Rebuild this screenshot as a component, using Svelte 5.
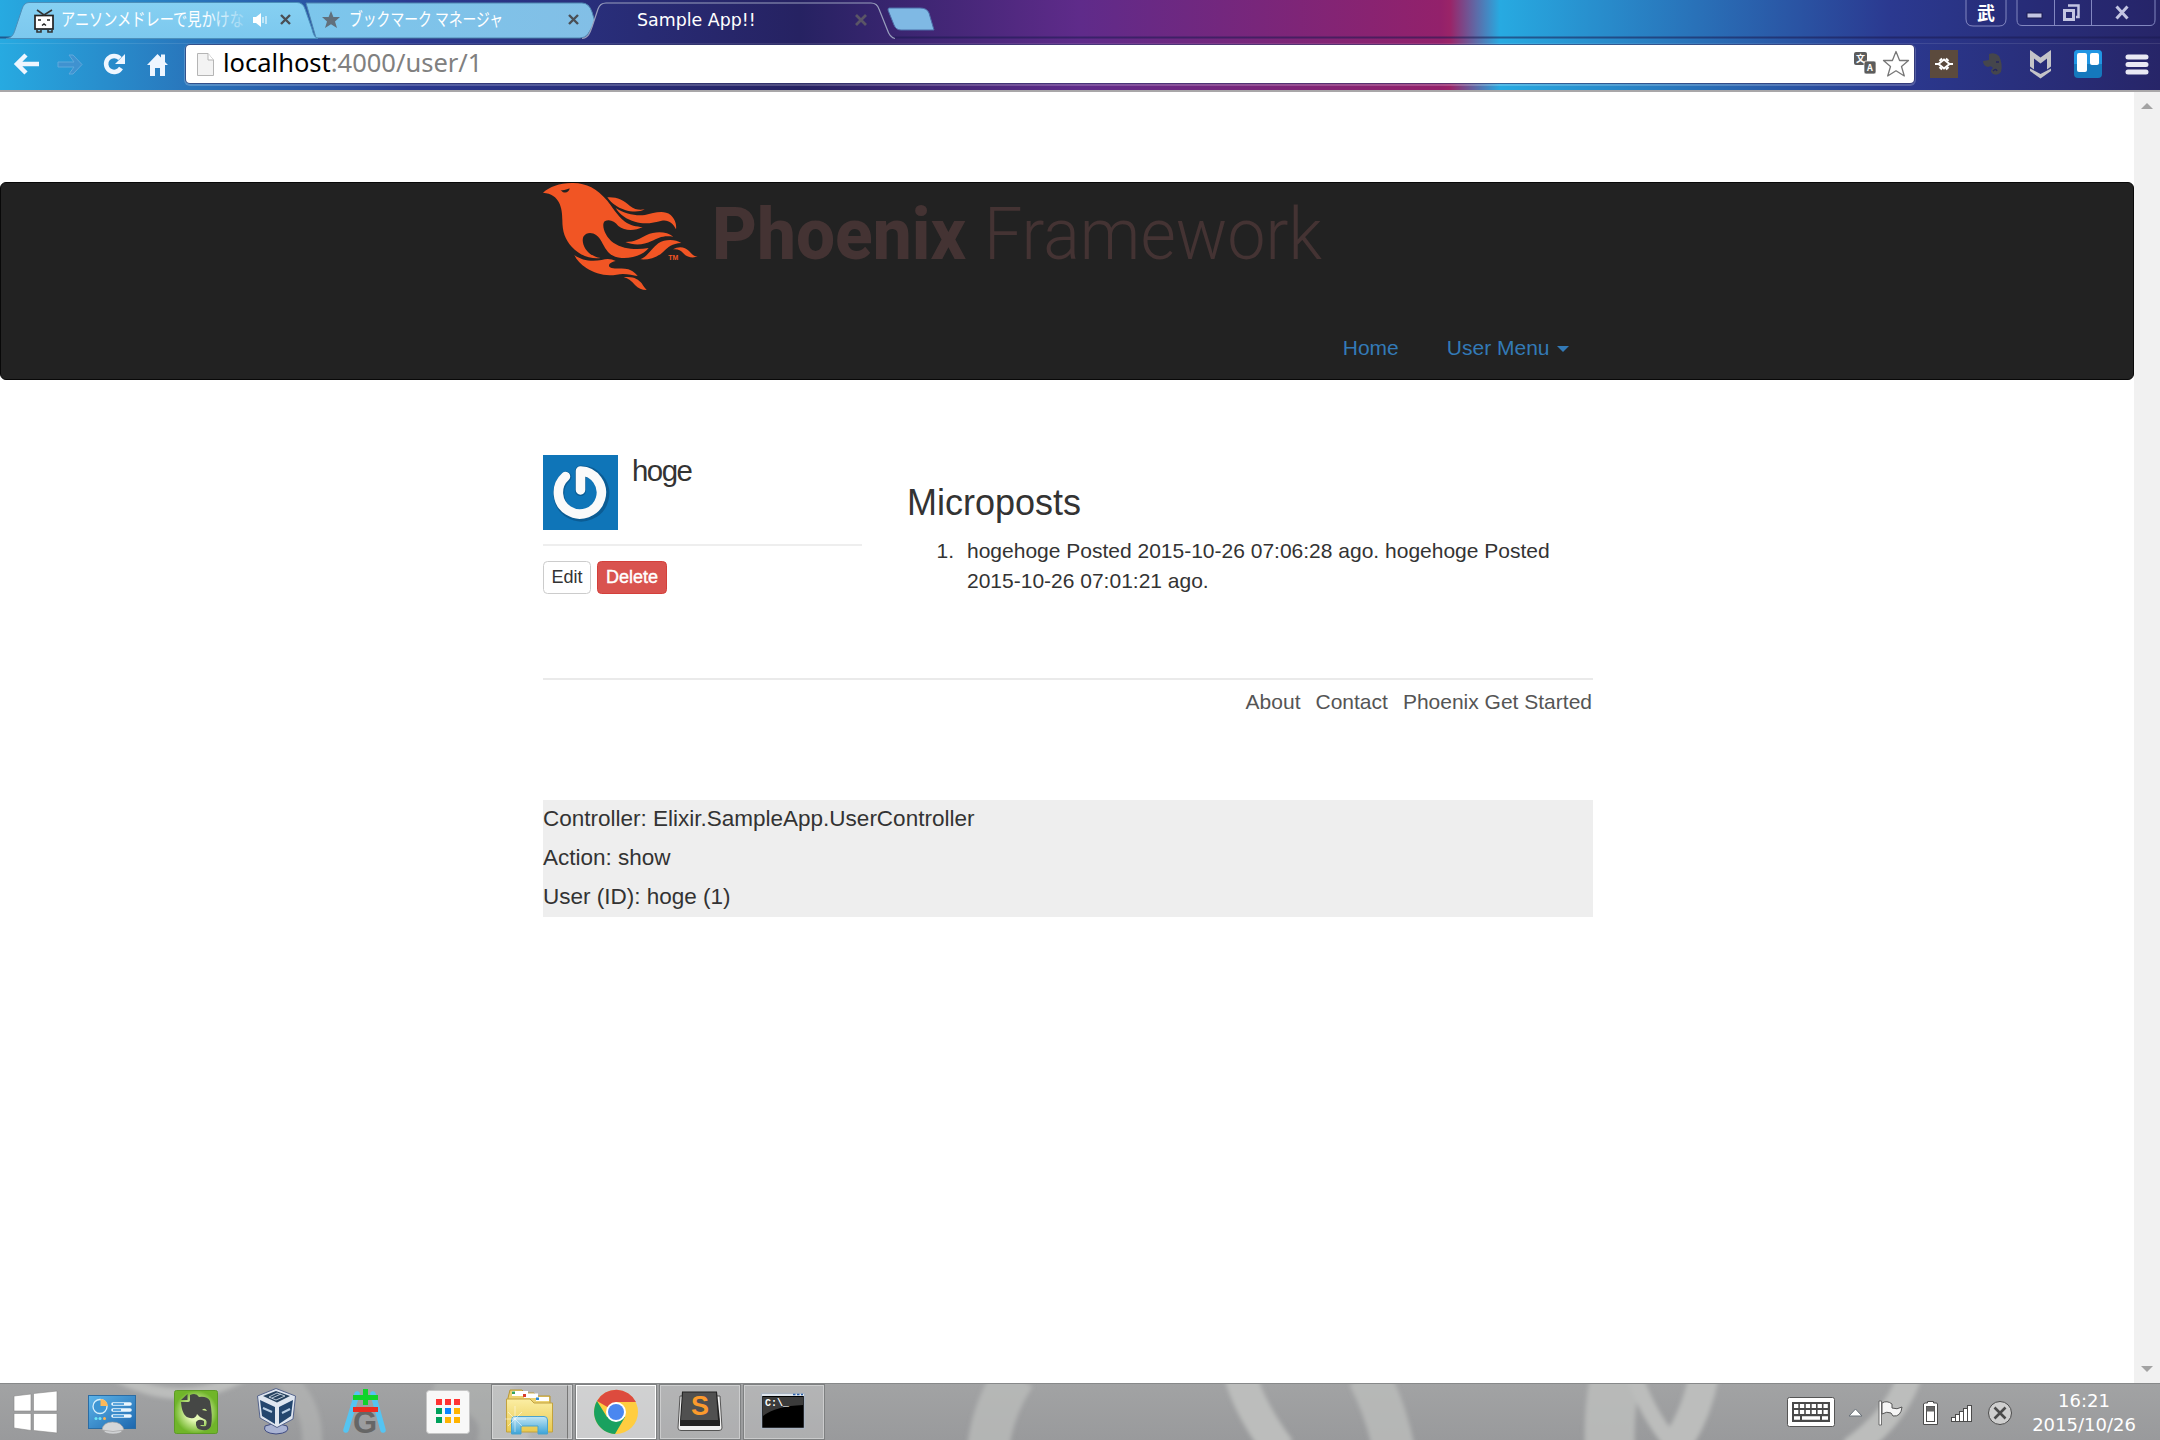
<script>
  const footerLinks = ['About', 'Contact', 'Phoenix Get Started'];
  const debugLines = [
    'Controller: Elixir.SampleApp.UserController',
    'Action: show',
    'User (ID): hoge (1)'
  ];
  const gridColors = ['#f33', '#f33', '#f33', '#00a15b', '#0a84ff', '#ffb300', '#00a15b', '#ffb300', '#ffb300'];
</script>

<div class="screen">
  <header class="browser">
    <svg class="tab-shapes" viewBox="0 0 2160 46" width="2160" height="46" aria-hidden="true">
      <defs>
        <linearGradient id="tabFill" x1="0" x2="0" y1="0" y2="1">
          <stop offset="0" stop-color="#86d0f2" /><stop offset="1" stop-color="#7cc8ee" />
        </linearGradient>
        <linearGradient id="tabFill2" x1="0" x2="1">
          <stop offset="0" stop-color="#7cc6ec" /><stop offset="1" stop-color="#82bfe6" />
        </linearGradient>
        <linearGradient id="strip" x1="0" x2="2160" gradientUnits="userSpaceOnUse">
          <stop offset="0" stop-color="#27aae1" /><stop offset=".19" stop-color="#2b3990" />
          <stop offset=".37" stop-color="#262262" /><stop offset=".5" stop-color="#5f2b8a" />
        </linearGradient>
      </defs>
      <path d="M0 37.500H2160" stroke="#1a1a50" stroke-opacity=".55" stroke-width="2" />
      <path d="M0 43.500H2160" stroke="#fff" stroke-opacity=".1" />
      <path d="M306 3H582Q589 3 592 12L595 22L588 34Q585 38 580 38H316Z" fill="url(#tabFill2)" stroke="#4e86b0" />
      <path d="M6 38.500C13 38 14 33 16 27L22 9Q24 2.500 29 2.500H297Q303 2.500 305 9L312 29Q314 38 318 38.500Z" fill="url(#tabFill)" stroke="#4b8fba" />
      <path d="M582 39C588 38 590 33 592 27L598 9Q600 3 606 3H871Q877 3 879 9L887 29Q890 38 895 39V41H582Z" fill="url(#strip)" />
      <path d="M582 38.500C588 38 590 33 592 27L598 9Q600 3 606 3H871Q877 3 879 9L887 29Q890 38 895 38.500" fill="none" stroke="#9aa0be" stroke-width="1.200" />
      <path d="M889 8H920Q927 8 929 13L934 30H901Q896 30 894 25L888 10Q888 8 889 8Z" fill="#7fb9e4" stroke="#4d6da8" />
    </svg>

    <div class="tabs">
      <svg class="tab first" viewBox="0 0 310 40" width="310" height="40">
        <defs>
          <linearGradient id="fade" x1="205" x2="245" gradientUnits="userSpaceOnUse">
            <stop offset="0" stop-color="#fff" /><stop offset="1" stop-color="#fff" stop-opacity=".2" />
          </linearGradient>
        </defs>
        <rect x="35" y="15.500" width="18" height="13.500" fill="#fff" stroke="#222" stroke-width="1.700" />
        <path d="M37 10L44 15L52 10M37 30V32H41V30M48 30V32H52V30" fill="none" stroke="#333" stroke-width="1.600" />
        <path d="M38 20H41M47 20H50M42 25.500L44 24L46 25.500" fill="none" stroke="#222" stroke-width="1.500" />
        <text class="jp" x="61" y="26" textLength="183" lengthAdjust="spacingAndGlyphs" fill="url(#fade)">アニソンメドレーで見かけな</text>
        <path d="M253 17H256L261 13V27L256 23H253Z" fill="#fff" />
        <path d="M263 17V23M266 16V24" stroke="#fff" stroke-opacity=".8" stroke-width="1.300" />
        <path d="M281 15L290 24M290 15L281 24" stroke="#4a4f55" stroke-width="2.400" />
      </svg>
      <svg class="tab" viewBox="310 0 280 40" width="280" height="40">
        <path d="M331 11L333.400 17H340L335 21.500L337 28L331 24.300L325 28L327 21.500L322 17H328.600Z" fill="#61707c" />
        <text class="jp" x="349" y="26" textLength="154" lengthAdjust="spacingAndGlyphs" fill="#fff">ブックマーク マネージャ</text>
        <path d="M569 15L578 24M578 15L569 24" stroke="#4a4f55" stroke-width="2.400" />
      </svg>
      <div class="tab active">
        <span>Sample App!!</span>
        <svg viewBox="0 0 14 14" width="14" height="14"><path d="M2 2L12 12M12 2L2 12" stroke="#5a5566" stroke-width="2.800" /></svg>
      </div>
      <svg class="window-buttons" viewBox="1960 0 200 30" width="200" height="30">
        <g fill="#23256b" fill-opacity=".25" stroke="#8287c0" stroke-width="1">
          <path d="M1966 0V19Q1966 26 1973 26H1999Q2006 26 2006 19V0" />
          <path d="M2017 0V20Q2017 25.500 2022 25.500H2150Q2155 25.500 2155 20V0" />
          <path d="M2054.500 0V25M2091.500 0V25" />
        </g>
        <text class="kanji" x="1977" y="20">武</text>
        <rect x="2027" y="13" width="15" height="5" fill="#c3c5e2" stroke="#1b1b50" />
        <path d="M2068 5.500H2078.500V17H2076" fill="none" stroke="#c3c5e2" stroke-width="2.500" />
        <rect x="2064.500" y="10.500" width="9" height="9" fill="none" stroke="#c3c5e2" stroke-width="3" />
        <path d="M2116.500 6.500L2127.500 18.500M2127.500 6.500L2116.500 18.500" stroke="#c3c5e2" stroke-width="3" />
      </svg>
    </div>

    <div class="toolbar">
      <svg viewBox="0 41 186 46" width="186" height="46">
        <g fill="none" stroke="#eef6ff" stroke-width="4.500">
          <path d="M26 55L17 64L26 73M17 64H39" />
          <path d="M120 58.500A8 8 0 1 0 121 68" />
        </g>
        <path d="M125 54V64H115Z" fill="#eef6ff" />
        <path d="M69 55L73 55L82 64.500L73 74L69 74L74 67H58V62H74Z" fill="#3f92d0" stroke="#5fa9dc" />
        <path d="M147 65L157.500 54L161 57.500V54.500H165V62L168 65H165V76H160V68H155V76H150V65Z" fill="#eef6ff" />
      </svg>
      <div class="address">
        <svg viewBox="197 52 18 25" width="18" height="25">
          <path d="M197.500 53.500H208L213.500 60V75.500H197.500Z" fill="#f3f3f3" stroke="#b5b5b5" />
          <path d="M208 53.500V60H213.500" fill="#fff" stroke="#b5b5b5" />
        </svg>
        <p class="url">localhost<span>:4000/user/1</span></p>
        <svg viewBox="1852 49 60 30" width="60" height="30">
          <rect x="1854" y="52" width="13" height="13" rx="2" fill="#5c5c5c" />
          <rect x="1864" y="61" width="12" height="13" rx="2" fill="#5c5c5c" stroke="#fff" stroke-width=".7" />
          <text class="glyph" x="1856" y="62">文</text>
          <text class="glyph" x="1867" y="71">A</text>
          <path d="M1896 51.500L1899.600 60.500H1908.500L1901.500 66.500L1904.300 76L1896 70.800L1887.700 76L1890.500 66.500L1883.500 60.500H1892.400Z" fill="#fff" stroke="#777" stroke-width="1.300" stroke-linejoin="round" />
        </svg>
      </div>
      <svg viewBox="1914 41 246 46" width="246" height="46">
        <rect x="1930" y="50" width="28" height="28" fill="#5b4a3d" />
        <path d="M1944 59.500L1949.500 64L1944 68.500L1938.500 64Z" fill="none" stroke="#fff" stroke-width="2" />
        <path d="M1935 64H1939M1949 64H1953M1939.500 61L1942 58.500M1948.500 61L1946 58.500M1939.500 67L1942 69.500M1948.500 67L1946 69.500" stroke="#fff" stroke-width="2" />
        <path d="M1983 61L1989 60V54Q1995 52 1999 56Q2003 64 2001 72Q1998 76 1993 74Q1989 71 1993 68Q1991 65 1988 67Q1983 66 1983 61Z" fill="#45464c" />
        <path d="M1993 71Q1996 68 1997 71M1996 62H1999" stroke="#24265c" stroke-width="1.500" fill="none" />
        <path d="M2030 50L2040.500 57.500L2051 50V66.500L2047 69.500V58.500L2040.500 63.500L2034 58.500V69.500L2030 66.500Z" fill="#c4c4c8" />
        <path d="M2030 68.500L2040.500 74L2051 68.500V71L2040.500 78.500L2030 71Z" fill="#c4c4c8" />
        <rect x="2074" y="50" width="28" height="28" rx="4" fill="#1579bd" />
        <path d="M2074 64V54Q2074 50 2078 50H2098Q2102 50 2102 54V64Z" fill="#2196e3" />
        <rect x="2077" y="53" width="10" height="19" rx="2" fill="#fff" /><rect x="2090" y="53" width="9" height="12" rx="2" fill="#fff" />
        <path d="M2128 57H2146M2128 64.500H2146M2128 72H2146" stroke="#e9e9f4" stroke-width="5" stroke-linecap="round" />
      </svg>
    </div>
  </header>

  <div class="viewport">
    <div class="page">
      <nav class="navbar">
        <div class="container nav-inner">
          <svg class="logo" viewBox="543 183 790 110" width="790" height="110">
            <g transform="translate(520 170) scale(.33333)" fill="#f15524">
              <path d="M69 68C90 50 120 38 160 39C200 40 230 55 262 92C275 108 290 135 315 155C330 166 350 170 368 171C345 183 315 184 295 168C283 153 268 146 254 154C243 165 255 200 280 218C310 238 350 240 386 234C370 255 335 266 305 264C270 262 258 240 245 215C232 190 205 180 190 200C182 220 200 258 242 264C215 268 180 258 155 230C135 208 127 185 127 150C127 115 120 72 69 68Z" />
              <path d="M122 60C132 62 140 58 149 55C148 66 138 70 128 66Z" fill="#222" />
              <path d="M262 82C290 80 310 90 330 108C345 120 360 120 374 118C360 127 335 126 315 120C290 112 275 100 262 82Z" />
              <path d="M287 114C315 132 345 138 375 135C400 130 430 118 452 135C466 148 470 165 468 178C460 160 445 148 425 152C400 158 375 165 345 155C320 148 300 135 287 114Z" />
              <path d="M316 216C345 216 360 205 380 195C405 183 440 183 460 200C430 195 415 203 395 213C370 226 340 226 316 216Z" />
              <path d="M361 268C385 258 395 235 415 220C435 207 465 207 484 219C455 220 445 232 430 245C410 264 385 270 361 268Z" />
              <path d="M459 238C475 228 495 230 507 243C515 252 522 260 533 259C520 266 500 262 490 250C482 240 472 236 459 238Z" />
              <path d="M163 255C185 272 215 275 245 270C262 265 275 267 287 273C270 277 262 285 270 292C285 300 305 292 325 298C340 303 347 312 353 318C335 316 315 308 290 314C255 320 225 310 200 295C182 283 170 270 163 255Z" />
              <path d="M311 322C340 318 355 328 365 340C370 348 375 355 380 360C365 360 355 355 345 345C335 334 325 325 311 322Z" />
              <text class="tm" x="445" y="270" textLength="30" lengthAdjust="spacingAndGlyphs">TM</text>
            </g>
            <text class="brand bold" x="712" y="258.500" textLength="254" lengthAdjust="spacingAndGlyphs">Phoenix</text>
            <text class="brand light" x="984" y="258.500" textLength="338" lengthAdjust="spacingAndGlyphs">Framework</text>
          </svg>
          <ul class="nav-links">
            <li>Home</li>
            <li>User Menu<i class="caret"></i></li>
          </ul>
        </div>
      </nav>

      <main class="container">
        <div class="columns">
          <aside>
            <div class="profile">
              <svg viewBox="0 0 75 75" width="75" height="75">
                <rect width="75" height="75" fill="#0f75b8" />
                <path d="M23 21.500A22.500 22.500 0 1 0 37.500 15.500V35" transform="translate(0 .5)" fill="none" stroke="#0b5c94" stroke-width="11" stroke-linecap="round" stroke-linejoin="round" />
                <path d="M22.500 21.500A21.500 21.500 0 1 0 37.500 16V35" fill="none" stroke="#fafafa" stroke-width="9.500" stroke-linecap="round" stroke-linejoin="round" />
              </svg>
              <h1>hoge</h1>
            </div>
            <div class="actions">
              <button class="btn">Edit</button>
              <button class="btn danger">Delete</button>
            </div>
          </aside>
          <section>
            <h3>Microposts</h3>
            <ol>
              <li>
                <span class="marker">1.</span>
                <span>hogehoge Posted 2015-10-26 07:06:28 ago. hogehoge Posted 2015-10-26 07:01:21 ago.</span>
              </li>
            </ol>
          </section>
        </div>
        <footer>
          {#each footerLinks as link}<span>{link}</span>{/each}
        </footer>
        <div class="debug">
          {#each debugLines as line}<p>{line}</p>{/each}
        </div>
      </main>
    </div>
    <div class="scrollbar">
      <i class="up"></i>
      <i class="down"></i>
    </div>
  </div>

  <div class="taskbar">
    <svg class="wallpaper" viewBox="0 1383 2160 57" width="2160" height="57" aria-hidden="true">
      <defs>
        <linearGradient id="bar" x1="0" x2="0" y1="0" y2="1">
          <stop offset="0" stop-color="#a2a3a4" /><stop offset="1" stop-color="#999a9c" />
        </linearGradient>
        <filter id="soft"><feGaussianBlur stdDeviation="2" /></filter>
      </defs>
      <rect y="1383" width="2160" height="57" fill="url(#bar)" />
      <g fill="none" stroke="#bcbdbc" filter="url(#soft)">
        <path d="M115 1375Q180 1412 245 1375" stroke-width="11" />
        <path d="M275 1370Q315 1400 312 1445" stroke-width="20" stroke-opacity=".5" />
        <path d="M440 1370Q520 1400 500 1450" stroke-width="50" stroke-opacity=".4" />
        <path d="M1015 1375Q992 1410 988 1450" stroke-width="42" stroke-opacity=".75" />
        <path d="M1240 1375Q1250 1410 1280 1450" stroke-width="32" />
        <path d="M1368 1375Q1386 1410 1394 1450" stroke-width="42" stroke-opacity=".8" />
        <path d="M1616 1375Q1608 1410 1610 1450" stroke-width="50" stroke-opacity=".85" />
        <path d="M1634 1375Q1650 1420 1678 1450" stroke-width="16" />
        <path d="M1704 1375Q1696 1418 1672 1450" stroke-width="30" />
        <path d="M1910 1375Q1896 1418 1850 1450" stroke-width="24" />
      </g>
      <path d="M0 1383.500H2160" stroke="#87898a" />
    </svg>

    <svg class="start" viewBox="0 1384 70 56" width="70" height="56">
      <path d="M14 1396L31 1394V1411H14ZM33.500 1393.500L57 1391V1411H33.500ZM14 1413.500H31V1430.500L14 1428ZM33.500 1413.500H57V1433L33.500 1430.500Z" fill="#fff" stroke="#888" stroke-width=".6" />
    </svg>
    <svg viewBox="70 1384 84 56" width="84" height="56">
      <defs><linearGradient id="cp" x2="1" y2="1"><stop offset="0" stop-color="#5eb5ea" /><stop offset="1" stop-color="#1d67ae" /></linearGradient></defs>
      <rect x="88.500" y="1395.500" width="47" height="33" fill="url(#cp)" stroke="#2b6ca3" />
      <circle cx="100" cy="1406.500" r="7" fill="#3e96d4" stroke="#d7effb" stroke-width="1.300" />
      <path d="M100.500 1406V1399A7.500 7.500 0 0 1 108 1406Z" fill="#fbb95b" />
      <path d="M113 1404H130M113 1410H130M113 1416H130" stroke="#e9f6fe" stroke-width="3.600" stroke-linecap="round" />
      <path d="M113 1404H124M113 1410H121M113 1416H124" stroke="#2c8bd2" stroke-width="1.600" />
      <circle cx="96" cy="1418.500" r="1.500" fill="#6ee8f5" /><circle cx="100" cy="1418.500" r="1.500" fill="#6ee8f5" /><circle cx="104.500" cy="1418.500" r="1.500" fill="#ffb34d" />
      <ellipse cx="113" cy="1431" rx="9" ry="3" fill="#d0d2d4" stroke="#999" stroke-width=".6" />
      <path d="M102 1430Q103 1422 112.500 1422Q122 1422 124 1430Q113 1433 102 1430Z" fill="#d5d6d8" stroke="#999" stroke-width=".6" />
    </svg>
    <svg viewBox="154 1384 84 56" width="84" height="56">
      <defs><radialGradient id="ev"><stop offset=".4" stop-color="#e4f9b5" /><stop offset="1" stop-color="#70b52a" /></radialGradient></defs>
      <rect x="174.500" y="1390.500" width="43" height="43" rx="2" fill="url(#ev)" stroke="#5c9b25" />
      <path d="M181 1402H188Q190 1402 190 1400V1395Q196 1392 199 1397Q207 1396 210 1401Q213 1416 211 1426Q209 1431 202 1430Q195 1429 196 1422Q199 1418 204 1421V1425H200Q201 1427 206 1426Q208 1420 204 1419Q199 1417 197 1414Q196 1419 190 1418Q182 1417 181 1402Z" fill="#454745" />
      <path d="M181 1400L187.500 1394V1400Z" fill="#454745" />
      <path d="M202 1410Q205 1407 207 1411Z" fill="#c8ec86" />
    </svg>
    <svg viewBox="238 1384 84 56" width="84" height="56">
      <path d="M265 1426Q276 1422 287 1426Q291 1433 276 1434Q262 1433 265 1426Z" fill="#a9b3d3" stroke="#3f4b80" />
      <path d="M257.500 1396L276 1388.500L295.500 1396L293 1419L277 1427.500L260 1418Z" fill="#dfe6f0" stroke="#55648c" />
      <path d="M263 1396L276 1391L290 1396L277 1402.500Z" fill="#26425f" />
      <path d="M260 1400L275 1407V1424L262 1416ZM293 1400L279 1407V1424L291 1416Z" fill="#23466e" />
      <path d="M263 1408L272 1412M290 1409L282 1413" stroke="#b9cfe5" stroke-width="2" />
      <path d="M269 1397L277 1393L285 1396L276 1400ZM272 1398L281 1394" fill="none" stroke="#c9d6e2" stroke-width=".9" />
    </svg>
    <svg viewBox="322 1384 84 56" width="84" height="56">
      <path d="M357 1394L346 1430M373 1394L383 1430" stroke="#55c4f2" stroke-width="5.500" stroke-linecap="round" />
      <text class="latin-g" x="353" y="1432.500">G</text>
      <path d="M353 1397.500H378M365.500 1389V1405" stroke="#0fd42a" stroke-width="5" />
      <path d="M353 1409.500H378" stroke="#ec2b20" stroke-width="5" />
    </svg>
    <svg viewBox="406 1384 84 56" width="84" height="56">
      <rect x="426.500" y="1390.500" width="43" height="43" rx="3" fill="#f8f8f8" stroke="#c6c6c6" />
      {#each gridColors as color, i}
        <rect x={436 + (i % 3) * 9} y={1399 + Math.floor(i / 3) * 9} width="6" height="6" fill={color} />
      {/each}
    </svg>
    <div class="task stacked">
      <svg viewBox="492 1384 76 56" width="76" height="56">
        <defs>
          <linearGradient id="fold" y2="1" x2="0"><stop offset="0" stop-color="#fbeea4" /><stop offset="1" stop-color="#e9c94f" /></linearGradient>
          <linearGradient id="glass" y2="1" x2="0"><stop offset="0" stop-color="#c3e6f4" /><stop offset="1" stop-color="#3ba3d8" /></linearGradient>
        </defs>
        <path d="M508 1398L510 1390H522L525 1393H534L536 1396H550V1410H508Z" fill="#ecd272" stroke="#b99631" />
        <path d="M512 1391H528V1396H512ZM524 1393.500H538V1398H524ZM536 1397H549V1401H536Z" fill="#fff" />
        <path d="M512 1391.500H515V1394H512Z" fill="#35a35a" /><path d="M523 1394H526V1397H523Z" fill="#d93b2b" />
        <path d="M506.500 1399H530L534 1403H552.500V1432H506.500Z" fill="url(#fold)" stroke="#c2a23d" />
        <path d="M536 1397.500H548V1401H536Z" fill="#fff" /><path d="M536 1397.500H539V1400H536Z" fill="#2b8bd8" />
        <path d="M511.500 1434V1420Q511.500 1416.500 515 1416.500H544Q547.500 1416.500 547.500 1420V1434H538V1426H521V1434Z" fill="url(#glass)" stroke="#4ba3cd" />
        <path d="M515 1406V1432M505 1419H526M508 1412L522 1426M522 1412L508 1426" stroke="#fff" stroke-opacity=".5" />
      </svg>
    </div>
    <div class="task current">
      <svg viewBox="576 1384 80 56" width="80" height="56">
        <circle cx="616" cy="1412" r="22" fill="#ffcd40" />
        <path d="M616 1412L597 1401A22 22 0 0 1 636 1402H616Z" fill="#dd4b3e" />
        <path d="M597 1401A22 22 0 0 0 615 1434L625 1417L616 1412L607 1417Z" fill="#19a15f" />
        <circle cx="616" cy="1412" r="10" fill="#fff" /><circle cx="616" cy="1412" r="8" fill="#4a87f0" />
      </svg>
    </div>
    <div class="task">
      <svg viewBox="660 1384 80 56" width="80" height="56">
        <path d="M680 1396H720L722 1428Q722 1430.500 719 1430.500H681Q678 1430.500 678 1428Z" fill="#f1f1f1" stroke="#555" />
        <path d="M682 1391.500H717L720 1421V1426H680V1421Z" fill="#222" />
        <path d="M683 1392.500H716L718 1420H681Z" fill="#505050" />
        <text class="sublime" x="691" y="1414.500">S</text>
      </svg>
    </div>
    <div class="task">
      <svg viewBox="744 1384 80 56" width="80" height="56">
        <rect x="761.500" y="1393.500" width="43" height="35" fill="#000" stroke="#a9b3c0" stroke-width="1.500" />
        <path d="M762 1395H804" stroke="#dfe6ee" stroke-width="2" />
        <path d="M763 1397H803V1405Q776 1406 763 1416Z" fill="#3b3b3b" />
        <path d="M793 1394.500H803" stroke="#2d5fa8" stroke-width="1.500" stroke-dasharray="2.500 1.500" />
        <text class="prompt" x="765" y="1406">C:\_</text>
      </svg>
    </div>

    <div class="tray">
      <svg viewBox="1780 1384 240 56" width="240" height="56">
        <rect x="1787.500" y="1397.500" width="47" height="29" rx="2" fill="#fff" stroke="#555" />
        <rect x="1792" y="1402" width="38" height="20" fill="#494949" />
        <path d="M1794 1406H1829M1794 1412H1829" stroke="#fff" stroke-width="4" stroke-dasharray="4.300 1.600" />
        <path d="M1794 1418H1800M1802 1418H1820M1822 1418H1828" stroke="#fff" stroke-width="3.500" />
        <path d="M1849 1416L1855.500 1409L1862 1416Z" fill="#fff" stroke="#687078" />
        <path d="M1879 1401V1425H1881.500V1401Z" fill="#fff" stroke="#555" stroke-width=".8" />
        <path d="M1882 1403Q1887 1400 1892 1404V1408Q1897 1410 1902 1407Q1901 1417 1893 1416L1891 1413Q1887 1411 1882 1414Z" fill="#f5f5f5" stroke="#555" />
        <path d="M1924 1404Q1924 1403 1925.500 1403H1927.500V1401.500H1933.500V1403H1936Q1937.500 1403 1937.500 1404V1424.500H1923.500V1404Z" fill="#fff" stroke="#4b4b4b" />
        <rect x="1926.500" y="1406.500" width="8" height="15" fill="#fff" stroke="#4b4b4b" /><rect x="1926.500" y="1406.500" width="8" height="5" fill="#666" />
        <g fill="#fff" stroke="#4b4b4b">
          <rect x="1951.500" y="1417.500" width="4" height="4" /><rect x="1955.500" y="1414.500" width="4" height="7" /><rect x="1959.500" y="1411.500" width="4" height="10" /><rect x="1963.500" y="1408.500" width="4" height="13" /><rect x="1967.500" y="1405.500" width="4" height="16" />
        </g>
        <circle cx="2000" cy="1413" r="11.500" fill="#cfcfcf" stroke="#4b4b4b" />
        <path d="M1994.500 1407.500L2005.500 1418.500M2005.500 1407.500L1994.500 1418.500" stroke="#4b4b4b" stroke-width="2.600" />
      </svg>
      <div class="clock"><span>16:21</span><span>2015/10/26</span></div>
    </div>
  </div>
</div>

<style>
  :global(body) { background: #fff; }
  .screen {
    width: 2160px;
    height: 1440px;
    display: flex;
    flex-direction: column;
    overflow: hidden;
    font-family: "Liberation Sans", Arial, sans-serif;
    color: #333;
  }
  svg { display: block; flex: none; }
  p, h1, h3, ol, ul { margin: 0; padding: 0; font-weight: 400; }

  .browser {
    position: relative;
    box-sizing: border-box;
    height: 92px;
    flex: none;
    border-bottom: 2px solid #a9a7a9;
    background: linear-gradient(90deg, #27aae1 0, #2b3990 410px, #262262 800px, #5f2b8a 1080px, #93216b 1440px, #9a2468 1450px, #27aae1 1500px, #2b3990 1890px, #262262 2200px);
  }
  .tab-shapes { position: absolute; left: 0; top: 0; }
  .tabs { position: relative; display: flex; height: 41px; }
  .active {
    width: 283px;
    height: 40px;
    display: flex;
    align-items: center;
    justify-content: space-between;
    padding-left: 47px;
    box-sizing: border-box;
    color: #fff;
    font: 17.400px "DejaVu Sans", sans-serif;
  }
  .active svg { margin-right: 5px; }
  .window-buttons { margin-left: auto; }
  .jp { font: 18px "Noto Sans CJK JP", sans-serif; }
  .kanji { font: 700 18px "Noto Sans CJK JP", sans-serif; fill: #fff; }
  .glyph { font: 700 9px "Noto Sans CJK JP", sans-serif; fill: #fff; }
  .toolbar { position: relative; display: flex; align-items: flex-start; height: 49px; }
  .address {
    display: flex;
    align-items: center;
    width: 1728px;
    height: 38px;
    margin-top: 4px;
    padding: 0 2px 0 11px;
    box-sizing: border-box;
    background: #fff;
    border-radius: 4px;
    box-shadow: 0 0 0 1px rgba(25, 30, 90, .55), 0 1px 0 2px rgba(255, 255, 255, .2);
  }
  .url { flex: 1; padding: 0 0 3px 8px; color: #000; font: 25.500px/35px "Noto Sans", sans-serif; }
  .url span { color: #808080; }

  .viewport { display: flex; height: 1291px; flex: none; }
  .page { flex: 1; padding-top: 90px; box-sizing: border-box; }
  .container { width: 1050px; margin: 0 auto; position: relative; left: 1px; }
  .navbar {
    height: 198px;
    box-sizing: border-box;
    background: #222;
    border: 1.500px solid #080808;
    border-radius: 6px;
  }
  .nav-inner { display: flex; flex-direction: column; height: 100%; }
  .logo { overflow: visible; }
  .brand { font-family: Roboto, sans-serif; font-size: 72px; fill: #433; }
  .bold { font-weight: 800; }
  .light { font-weight: 300; }
  .tm { font: 700 20px "Liberation Sans", sans-serif; }
  .nav-links { display: flex; justify-content: flex-end; gap: 3px; margin: 30px 2px 0 0; list-style: none; font-size: 21px; line-height: 30px; color: #337ab7; }
  .nav-links li { display: flex; align-items: center; padding: 10px 22.500px; }
  .nav-links .caret { margin: 2px 0 0 7px; border: 6px solid transparent; border-top-color: #337ab7; border-bottom: 0; }

  .columns { display: flex; height: 298px; }
  aside { width: 319px; padding-top: 75px; }
  .profile { display: flex; height: 91px; border-bottom: 2px solid #eee; box-sizing: border-box; }
  .profile h1 { margin-left: 14px; font-size: 29.400px; line-height: 31px; letter-spacing: -1.500px; }
  .actions { display: flex; gap: 6px; margin-top: 15px; }
  .btn {
    height: 33px;
    padding: 0 7.500px;
    border: 1.500px solid #ccc;
    border-radius: 4.500px;
    background: #fff;
    color: #333;
    font: 18px/27px "Liberation Sans", Arial, sans-serif;
  }
  .danger { padding: 0 8px; background: #d9534f; border-color: #d43f3a; color: #fff; -webkit-text-stroke: .4px #fff; }
  section { margin-left: 45px; width: 660px; padding-top: 103px; }
  h3 { font-size: 36px; line-height: 40px; }
  ol { margin-top: 13px; font-size: 21px; line-height: 30px; }
  ol li { display: flex; }
  .marker { width: 60px; flex: none; padding-right: 13px; box-sizing: border-box; text-align: right; }
  footer {
    display: flex;
    justify-content: flex-end;
    gap: 15px;
    height: 122px;
    padding: 7px 1px 0 0;
    box-sizing: border-box;
    border-top: 2px solid #eaeaea;
    color: #555;
    font-size: 21px;
    line-height: 30px;
  }
  .debug { height: 117px; background: #eee; font-size: 22.500px; line-height: 39px; }
  .debug p { position: relative; top: -1px; }

  .scrollbar {
    width: 26px;
    background: #f1f1f1;
    display: flex;
    flex-direction: column;
    align-items: center;
    justify-content: space-between;
    padding: 11px 0;
    box-sizing: border-box;
  }
  .scrollbar i { border: 6px solid transparent; }
  .up { border-top: 0 !important; border-bottom-color: #a3a3a3 !important; }
  .down { border-bottom: 0 !important; border-top-color: #a3a3a3 !important; }

  .taskbar { position: relative; display: flex; height: 57px; padding-top: 1px; box-sizing: border-box; flex: none; }
  .wallpaper { position: absolute; left: 0; top: 0; }
  .taskbar > :not(.wallpaper) { position: relative; }
  .task {
    width: 82px;
    height: 56px;
    margin: 0 1px;
    flex: none;
    box-sizing: border-box;
    border: 1px solid #7e8081;
    box-shadow: inset 0 0 0 1px rgba(255, 255, 255, .35);
    background: rgba(255, 255, 255, .2);
  }
  .task svg { margin-top: -1px; }
  .stacked { background: linear-gradient(90deg, rgba(255, 255, 255, .25) 75px, #777 75px, #777 76px, rgba(255, 255, 255, .3) 76px); }
  .current { background: rgba(255, 255, 255, .5); box-shadow: inset 0 0 0 1px #fff; }
  .latin-g { font: 700 31px "Liberation Sans", sans-serif; fill: #666; }
  .sublime { font: 700 27px "Liberation Sans", sans-serif; fill: #fc9a2c; }
  .prompt { font: 700 10px "Liberation Mono", monospace; fill: #fff; }
  .tray { display: flex; margin-left: auto; }
  .clock {
    width: 128px;
    margin-right: 12px;
    display: flex;
    flex-direction: column;
    align-items: center;
    padding-top: 5px;
    color: #fff;
    font: 18px/24px "DejaVu Sans", sans-serif;
  }
</style>
